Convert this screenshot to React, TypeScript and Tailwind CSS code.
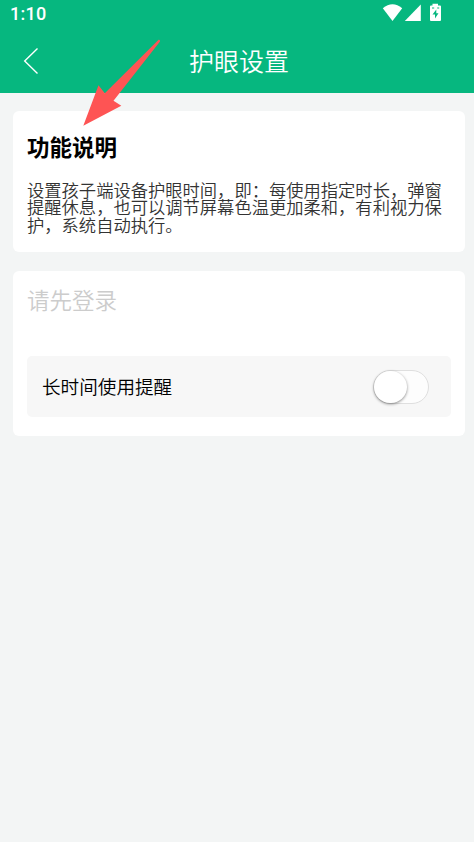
function StatusBar() {
  return (
    <div className="h-[28px] flex items-center justify-between pl-[10px] pr-[32px]">
      <span className="font-['Roboto',sans-serif] text-[18px] leading-[28px] font-medium tracking-[0.3px]">1:10</span>
      <svg className="w-[60px] h-[20px] -mt-1" viewBox="0 0 60 20" fill="currentColor">
        <path d="M0.8 6.3 Q10.5 -1.7 20.2 6.3 L10.5 19 Z" />
        <path d="M38.8 2.4 V19 H22.8 Z" />
        <path
          fillRule="evenodd"
          d="M50.5 1.8 H56 V3.6 H58 Q59 3.6 59 4.6 V18 Q59 19 58 19 H49 Q48 19 48 18 V4.6 Q48 3.6 49 3.6 H50.5 Z M54.3 7.5 L50.5 12.6 H53 V16.5 L56.5 11.2 H54.3 Z M50 5.4 H52.2 V6.4 H50 Z M55.2 5.4 H57.2 V6.4 H55.2 Z"
        />
      </svg>
    </div>
  );
}

function Header() {
  return (
    <header className="relative h-[93px] bg-[#06b77f] text-white">
      <StatusBar />
      <div className="grid h-[65px] grid-cols-[1fr_auto_1fr] items-center">
        <button aria-label="返回" className="pl-[23px]">
          <svg className="w-[16px] h-[26px] block" viewBox="0 0 16 26" fill="none" stroke="currentColor" strokeWidth="1.4">
            <path d="M14.5 0.6 L1.7 13 L14.5 25.4" />
          </svg>
        </button>
        <h1 className="-mt-[2px] ml-[4px] text-[25px] leading-[30px] font-[350]">护眼设置</h1>
      </div>
      <svg className="absolute left-[80px] top-[36px] w-[84px] h-[92px] z-10" viewBox="0 0 84 92">
        <path d="M78.6 3.8 Q80.5 3.5 80 5.5 L33.5 64.7 L41.3 69.8 L3.3 89.8 L18.5 49.2 L24.8 57.2 Z" fill="#fe5454" />
      </svg>
    </header>
  );
}

function Switch() {
  return (
    <button role="switch" aria-checked="false" className="mt-px flex w-[56px] h-[34px] rounded-full border border-[#dfdfdf] bg-[#fdfdfd]">
      <span className="w-[33px] h-[32px] rounded-full bg-white shadow-[0_1px_3px_rgba(0,0,0,0.45)]" />
    </button>
  );
}

export default function App() {
  return (
    <div className="min-h-screen bg-[#f3f5f5] font-['Noto_Sans_CJK_SC',sans-serif] font-[350] text-black">
      <Header />
      <main className="flex flex-col gap-[19px] pt-[18px] pl-[13px] pr-[9px]">
        <section className="h-[141px] rounded-md bg-white px-[14px] pt-[19px]">
          <h2 className="text-[22.5px] leading-[32px] font-bold">功能说明</h2>
          <p className="mt-[19px] w-[418px] text-[17.3px] leading-[17.3px] text-[#333]">
            设置孩子端设备护眼时间，即：每使用指定时长，弹窗提醒休息，也可以调节屏幕色温更加柔和，有利视力保护，系统自动执行。
          </p>
        </section>
        <section className="h-[165px] rounded-md bg-white px-[14px] pt-[12px]">
          <div className="text-[22.5px] leading-[32px] text-[#ccc]">请先登录</div>
          <div className="mt-[41px] flex h-[61px] items-center justify-between rounded-[5px] bg-[#f7f7f7] pl-[15px] pr-[22px]">
            <span className="-mt-[2px] text-[18.6px] leading-[28px]">长时间使用提醒</span>
            <Switch />
          </div>
        </section>
      </main>
    </div>
  );
}
